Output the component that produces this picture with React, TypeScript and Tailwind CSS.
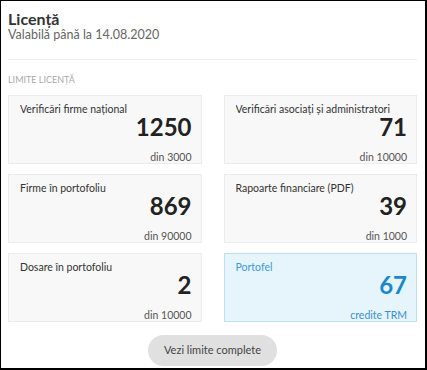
import React from "react"

interface Limit {
    label: string
    value: string
    sub: string
    highlight?: boolean
}

const limits: Limit[] = [
    { label: "Verificări firme național", value: "1250", sub: "din 3000" },
    { label: "Verificări asociați și administratori", value: "71", sub: "din 10000" },
    { label: "Firme în portofoliu", value: "869", sub: "din 90000" },
    { label: "Rapoarte financiare (PDF)", value: "39", sub: "din 1000" },
    { label: "Dosare în portofoliu", value: "2", sub: "din 10000" },
    { label: "Portofel", value: "67", sub: "credite TRM", highlight: true },
]

const LimitCard = ({ label, value, sub, highlight }: Limit) => {
    return (
        <div
            className={`h-[69px] border pl-[11px] pr-[9px] pt-[6px] ${
                highlight ? "border-[#bfe0f2] bg-[#e6f4fb]" : "border-[#ececec] bg-[#f8f8f8]"
            }`}
        >
            <div className={`truncate text-[10.5px] leading-[14px] ${highlight ? "text-[#3d9bd6]" : "text-[#333]"}`}>{label}</div>
            <div className={`text-right text-[24px] font-bold leading-[22px] ${highlight ? "text-[#1a88c9]" : "text-[#222]"}`}>
                {value}
            </div>
            <div className={`mt-[12px] text-right text-[10.5px] leading-[14px] ${highlight ? "text-[#3a90cb]" : "text-[#555]"}`}>{sub}</div>
        </div>
    )
}

export default function App() {
    return (
        <div className="h-[370px] w-[427px] border-l border-t border-r-2 border-b-2 border-black bg-white pl-[7px] pr-2 font-['Lato',_'Noto_Sans',_sans-serif]">
            <div className="pt-[9px]">
                <div className="text-[16px] font-bold leading-[18px] text-[#333]">Licență</div>
                <div className="text-[12.5px] leading-[14px] text-[#666]">Valabilă până la 14.08.2020</div>
            </div>
            <div className="mt-[17px] border-t border-[#eee]" />
            <div className="mt-[14px] text-[9px] uppercase leading-3 text-[#aaa]">Limite licență</div>
            <div className="mt-[9px] grid grid-cols-2 gap-x-[22px] gap-y-[10px]">
                {limits.map((l) => (
                    <LimitCard key={l.label} {...l} />
                ))}
            </div>
            <div className="mt-[13px] flex justify-center">
                <button className="h-[31px] rounded-full bg-[#e0e0e0] px-[16px] text-[11px] text-[#444]">Vezi limite complete</button>
            </div>
        </div>
    )
}
